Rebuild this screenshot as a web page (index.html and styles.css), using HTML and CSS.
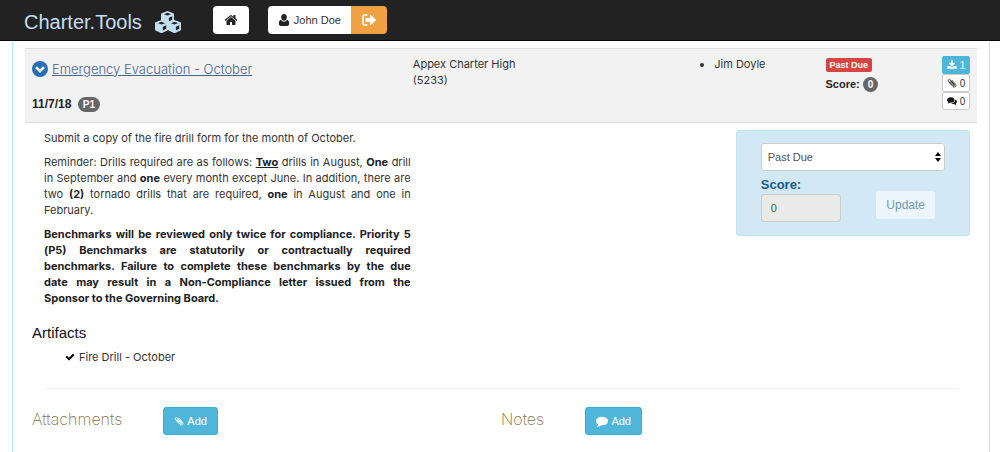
FILE: index.html
```html
<!DOCTYPE html>
<html lang="en">
<head>
  <meta charset="UTF-8">
  <meta name="viewport" content="width=device-width, initial-scale=1.0">
  <title>Charter.Tools</title>
  <link rel="stylesheet" href="styles.css">
</head>
<body>
  <!-- shared icons -->
  <svg class="sprite" aria-hidden="true">
    <symbol id="clip" viewBox="0 0 16 16">
      <path d="M4.200 6.200l5.600 6.100c1.100 1.200 3.300-.6 2.100-2L5.300 3.100C3.500 1.200.6 3.800 2.400 5.800l7 7.600c2.800 2.900 6.700-.5 4.200-3.500L8 3.800M6 5.200l5 5.500" fill="none" stroke="currentColor" stroke-width="1.600" stroke-linecap="round"/>
    </symbol>
    <symbol id="cube" viewBox="0 0 14 14">
      <path d="M7 0l6.300 2.500q.7.300.7 1v6.700q0 .7-.6 1L7.600 13.900q-.6.200-1.200 0L.6 11.200q-.6-.3-.6-1V3.500q0-.7.700-1z" fill="currentColor"/>
      <path d="M7 1.900l3.800 1.500L7 4.900 3.200 3.400zM8.500 7.300l3.600-1.600v3.700l-3.600 1.900z" fill="#222"/>
    </symbol>
  </svg>

  <nav class="navbar">
    <a class="brand" href="#">Charter.Tools
      <svg class="cubes" viewBox="0 0 26 22" aria-hidden="true">
        <use href="#cube" x="6" y="0" width="13" height="13"/>
        <use href="#cube" x="0" y="9" width="13" height="13"/>
        <use href="#cube" x="13" y="9" width="13" height="13"/>
      </svg>
    </a>
    <button class="nav-btn home-btn" type="button" aria-label="Home">
      <svg class="icon-lg" viewBox="0 0 1792 1792"><path fill="currentColor" d="M1472 992v480q0 26-19 45t-45 19h-384v-384h-256v384h-384q-26 0-45-19t-19-45v-480q0-1 .5-3t.5-3l575-474 575 474q1 2 1 6zm223-69l-62 74q-8 9-21 11h-3q-13 0-21-7l-692-577-692 577q-12 8-24 7-13-2-21-11l-62-74q-8-10-7-23.500t11-21.500l719-599q32-26 76-26t76 26l244 204v-195q0-14 9-23t23-9h192q14 0 23 9t9 23v408l219 182q10 8 11 21.500t-7 23.500z"/></svg>
    </button>
    <div class="btn-group">
      <button class="nav-btn user-btn" type="button">
        <svg class="icon-md" viewBox="0 0 12 14" aria-hidden="true"><path fill="currentColor" d="M6 0c2 0 3.300 1.500 3.300 3.800S7.800 8 6 8 2.700 6.100 2.700 3.800 4 0 6 0zM2.600 6.800C3.400 8.200 4.600 9 6 9s2.600-.8 3.400-2.200C11.300 7.300 12 9 12 11.500c0 1.600-1 2.500-2.400 2.500H2.400C1 14 0 13.100 0 11.500 0 9 .7 7.300 2.600 6.800z"/></svg>
        John Doe
      </button>
      <button class="nav-btn logout-btn" type="button" aria-label="Sign out">
        <svg class="icon-lg" viewBox="0 0 14 12"><path d="M5 1H3Q1 1 1 3v6q0 2 2 2h2" fill="none" stroke="currentColor" stroke-width="1.500" stroke-linecap="round"/><path fill="currentColor" d="M4 4h4V1.200q.2-.7.800-.3l5 4.700q.3.400 0 .8l-5 4.700q-.6.400-.8-.3V8H4q-.5 0-.5-.5v-3Q3.500 4 4 4z"/></svg>
      </button>
    </div>
  </nav>

  <main class="panel">
    <section class="summary">
      <div class="col-title">
        <h2 class="title">
          <svg class="toggle" viewBox="0 0 16 16" aria-hidden="true"><circle cx="8" cy="8" r="8" fill="#2a6eb5"/><path d="M4 6.200l4 4 4-4" fill="none" stroke="#fff" stroke-width="2.500"/></svg>
          <a href="#">Emergency Evacuation - October</a>
        </h2>
        <div class="due"><strong>11/7/18</strong> <span class="badge">P1</span></div>
      </div>
      <div class="col-school">Appex Charter High<br>(5233)</div>
      <ul class="col-people">
        <li>Jim Doyle</li>
      </ul>
      <div class="col-status">
        <span class="label-danger">Past Due</span>
        <div class="score"><strong>Score:</strong> <span class="badge">0</span></div>
      </div>
      <div class="col-counts">
        <button class="count count-info" type="button" aria-label="Artifacts">
          <svg class="icon-sm" viewBox="0 0 1792 1700"><path fill="currentColor" d="M1728 1120v320q0 40-28 68t-68 28h-1472q-40 0-68-28t-28-68v-320q0-40 28-68t68-28h465l135 136q58 56 136 56t136-56l136-136h464q40 0 68 28t28 68zm-325-569q17 41-14 70l-448 448q-18 19-45 19t-45-19l-448-448q-31-29-14-70 17-39 59-39h256v-448q0-26 19-45t45-19h256q26 0 45 19t19 45v448h256q42 0 59 39z"/></svg>
          1
        </button>
        <button class="count" type="button" aria-label="Attachments">
          <svg class="icon-sm"><use href="#clip"/></svg>
          0
        </button>
        <button class="count" type="button" aria-label="Notes">
          <svg class="icon-sm" viewBox="0 0 16 14"><path fill="#111" d="M6 1c3.500 0 6 1.900 6 4.300S9.500 9.600 6 9.600l-1-.1Q3.500 11 1 11q1.200-1 1.200-2.500Q0 7.300 0 5.300C0 2.900 2.500 1 6 1zM13 4.500q3 1.200 3 3.600 0 1.700-1.800 2.900 0 1.400 1 2.500-2.400 0-3.800-1.600-2.800.3-4.900-1.200C10.300 10.700 13 8.500 13 4.500z"/></svg>
          0
        </button>
      </div>
    </section>

    <section class="details">
      <div class="description">
        <p>Submit a copy of the fire drill form for the month of October.</p>
        <p>Reminder: Drills required are as follows: <strong><u>Two</u></strong> drills in August, <strong>One</strong> drill in September and <strong>one</strong> every month except June. In addition, there are two <strong>(2)</strong> tornado drills that are required, <strong>one</strong> in August and one in February.</p>
        <p><strong>Benchmarks will be reviewed only twice for compliance. Priority 5 (P5) Benchmarks are statutorily or contractually required benchmarks. Failure to complete these benchmarks by the due date&nbsp;may result in a Non-Compliance letter issued from the Sponsor&nbsp;to the Governing Board.</strong></p>
      </div>
      <form class="status-form">
        <div class="select-wrap">
          <select class="field" aria-label="Status">
            <option>Past Due</option>
            <option>Complete</option>
          </select>
          <svg class="arrows" viewBox="0 0 6 10" aria-hidden="true"><path d="M0 4l3-4 3 4zM0 6l3 4 3-4z"/></svg>
        </div>
        <div class="score-row">
          <div class="score-field">
            <label for="score">Score:</label>
            <input class="field" id="score" type="text" value="0" readonly>
          </div>
          <button class="update-btn" type="button" disabled>Update</button>
        </div>
      </form>
    </section>

    <section class="artifacts">
      <h3>Artifacts</h3>
      <ul>
        <li>
          <svg class="icon-sm" viewBox="0 0 1792 1792" aria-hidden="true"><path d="M1671 566q0 40-28 68l-724 724-136 136q-28 28-68 28t-68-28l-136-136-362-362q-28-28-28-68t28-68l136-136q28-28 68-28t68 28l294 295 656-657q28-28 68-28t68 28l136 136q28 28 28 68z"/></svg>
          Fire Drill - October
        </li>
      </ul>
    </section>

    <hr>

    <section class="extras">
      <div class="extra">
        <h4>Attachments</h4>
        <button class="add-btn" type="button">
          <svg class="icon-sm" aria-hidden="true"><use href="#clip"/></svg>
          Add
        </button>
      </div>
      <div class="extra notes">
        <h4>Notes</h4>
        <button class="add-btn" type="button">
          <svg class="icon-md" viewBox="0 0 1792 1792" aria-hidden="true"><path fill="currentColor" d="M1792 896q0 174-120 321.500t-326 233-450 85.500q-70 0-145-8-198 175-460 242-49 14-114 22-17 2-30.500-9t-17.500-29v-1q-3-4-.5-12t2-10 4.500-9.500l6-9 7-8.500 8-9q7-8 31-34.500t34.500-38 31-39.500 32.500-51 27-59 26-76q-157-89-247.500-220t-90.500-281q0-130 71-248.500t191-204.500 286-136.500 348-50.500q244 0 450 85.500t326 233 120 321.500z"/></svg>
          Add
        </button>
      </div>
    </section>
  </main>
</body>
</html>
```
FILE: styles.css
```css
* {
  box-sizing: border-box;
}

body {
  margin: 0;
  min-height: 100vh;
  display: flex;
  flex-direction: column;
  font-family: Inter, "Liberation Sans", Arial, sans-serif;
  font-size: 11px;
  line-height: 16px;
  color: #333;
  background: #fff;
}

button,
input,
select,
label,
.due,
.score,
.label-danger,
.artifacts h3,
.brand {
  font-family: "Liberation Sans", Arial, sans-serif;
}

button,
input,
select {
  font-size: 11px;
}

strong {
  color: #222;
}

.sprite {
  position: absolute;
  width: 0;
  height: 0;
}

.icon-sm {
  width: 10px;
  height: 10px;
}

.icon-md {
  width: 12px;
  height: 12px;
}

.icon-lg {
  width: 14px;
  height: 14px;
}

/* top bar */
.navbar {
  display: flex;
  align-items: center;
  height: 41px;
  padding: 0 24px;
  background: #222;
  border-bottom: 1px solid #080808;
}

.brand {
  display: flex;
  align-items: center;
  gap: 13px;
  margin-right: 32px;
  padding-top: 4px;
  font-size: 20px;
  line-height: 24px;
  color: #c5dff0;
  text-decoration: none;
}

.cubes {
  width: 26px;
  height: 22px;
}

.nav-btn {
  display: flex;
  align-items: center;
  justify-content: center;
  gap: 4px;
  height: 28px;
  padding: 0 10px;
  border: 0;
  border-radius: 4px;
  background: #fff;
  color: #333;
  cursor: pointer;
}

.home-btn {
  width: 36px;
  margin-right: 19px;
  color: #222;
}

.btn-group {
  display: flex;
}

.user-btn {
  border-radius: 4px 0 0 4px;
}

.user-btn svg {
  color: #222;
}

.logout-btn {
  width: 36px;
  border-radius: 0 4px 4px 0;
  background: #eea243;
  color: #fff;
}

/* benchmark panel */
.panel {
  flex: 1;
  margin: 0 10px 0 12px;
  padding: 7px 12px 0;
  border: 1px solid #bce8f1;
  border-width: 0 1px;
}

.summary {
  display: flex;
  min-height: 75px;
  padding: 7px;
  background: #f2f2f2;
  border: 1px solid #ddd;
  border-width: 1px 0;
}

.col-title {
  width: 40.6%;
}

.title {
  display: flex;
  align-items: center;
  gap: 4px;
  margin: 4px 0 18px;
  font-size: 13px;
  font-weight: 300;
  line-height: 18px;
}

.title a {
  color: #47658a;
}

.toggle {
  width: 16px;
  height: 16px;
}

.badge {
  display: inline-block;
  padding: 2px 5px;
  border-radius: 8px;
  background: #666;
  color: #fff;
  font-size: 10px;
  font-weight: bold;
  line-height: 11px;
}

.due {
  font-size: 12px;
}

.due .badge {
  margin-left: 3px;
}

.col-school {
  width: 30%;
}

.col-people {
  width: 14%;
  margin: 0;
  padding-left: 20px;
}

.col-status {
  flex: 1;
}

.label-danger {
  display: inline-block;
  padding: 1px 4px;
  border-radius: 2px;
  background: #d64541;
  color: #fff;
  font-size: 9px;
  font-weight: bold;
  line-height: 12px;
}

.score {
  margin-top: 4px;
}

.col-counts {
  display: flex;
  flex-direction: column;
  width: 28px;
}

.count {
  display: flex;
  align-items: center;
  justify-content: center;
  gap: 3px;
  height: 18px;
  padding: 0;
  border: 1px solid #ccc;
  border-radius: 2px;
  background: #fff;
  color: #333;
  font-size: 10px;
  cursor: pointer;
}

.count-info {
  border-color: #46b8da;
  background: #50b6d9;
  color: #fff;
}

.details {
  display: flex;
  justify-content: space-between;
  align-items: flex-start;
  padding: 7px 7px 0 19px;
}

.description {
  width: 39.6%;
  text-align: justify;
}

.description p {
  margin: 0 0 8px;
}

.status-form {
  width: 25.3%;
  min-height: 106px;
  padding: 12px 24px;
  border: 1px solid #bce8f1;
  border-radius: 3px;
  background: #d2e8f5;
}

.select-wrap {
  position: relative;
}

.field {
  display: block;
  width: 100%;
  height: 28px;
  padding: 0 9px;
  border: 1px solid #ccc;
  border-radius: 3px;
  background: #fff;
  color: #555;
  appearance: none;
}

.select-wrap .field {
  padding: 0 6px;
}

.arrows {
  position: absolute;
  top: 9px;
  right: 4px;
  width: 6px;
  height: 10px;
}

.score-row {
  display: flex;
  justify-content: space-between;
  align-items: flex-end;
  margin-top: 5px;
  padding-right: 10px;
}

.score-field {
  width: 80px;
}

.score-field label {
  display: block;
  line-height: 18px;
  font-size: 13px;
  font-weight: bold;
  color: #1b5a82;
}

.score-field .field {
  background: #eaeaea;
}

.update-btn {
  height: 28px;
  margin-bottom: 3px;
  padding: 0 10px;
  border: 0;
  border-radius: 3px;
  background: #edf6fc;
  color: #6d9ab5;
  font-size: 12px;
}

.artifacts {
  padding: 0 7px;
}

.artifacts h3 {
  margin: 10px 0 7px;
  font-size: 15px;
  font-weight: normal;
  line-height: 18px;
  color: #111;
}

.artifacts ul {
  margin: 0;
  padding-left: 33px;
  list-style: none;
}

.artifacts li {
  display: flex;
  align-items: center;
  gap: 4px;
}

hr {
  margin: 23px 19px 18px;
  border: 0;
  border-top: 1px solid #eee;
}

.extras {
  display: flex;
  padding: 0 7px;
}

.extra {
  display: flex;
  width: 50%;
}

.extra h4 {
  width: 28%;
  margin: 0;
  font-size: 16px;
  font-weight: 200;
  line-height: 24px;
  color: #8a7045;
}

.extra.notes h4 {
  width: 18%;
}

.add-btn {
  display: flex;
  align-items: center;
  gap: 3px;
  height: 28px;
  padding: 0 10px;
  border: 1px solid #35aed5;
  border-radius: 3px;
  background: #50b6d9;
  color: #fff;
  cursor: pointer;
}
```
